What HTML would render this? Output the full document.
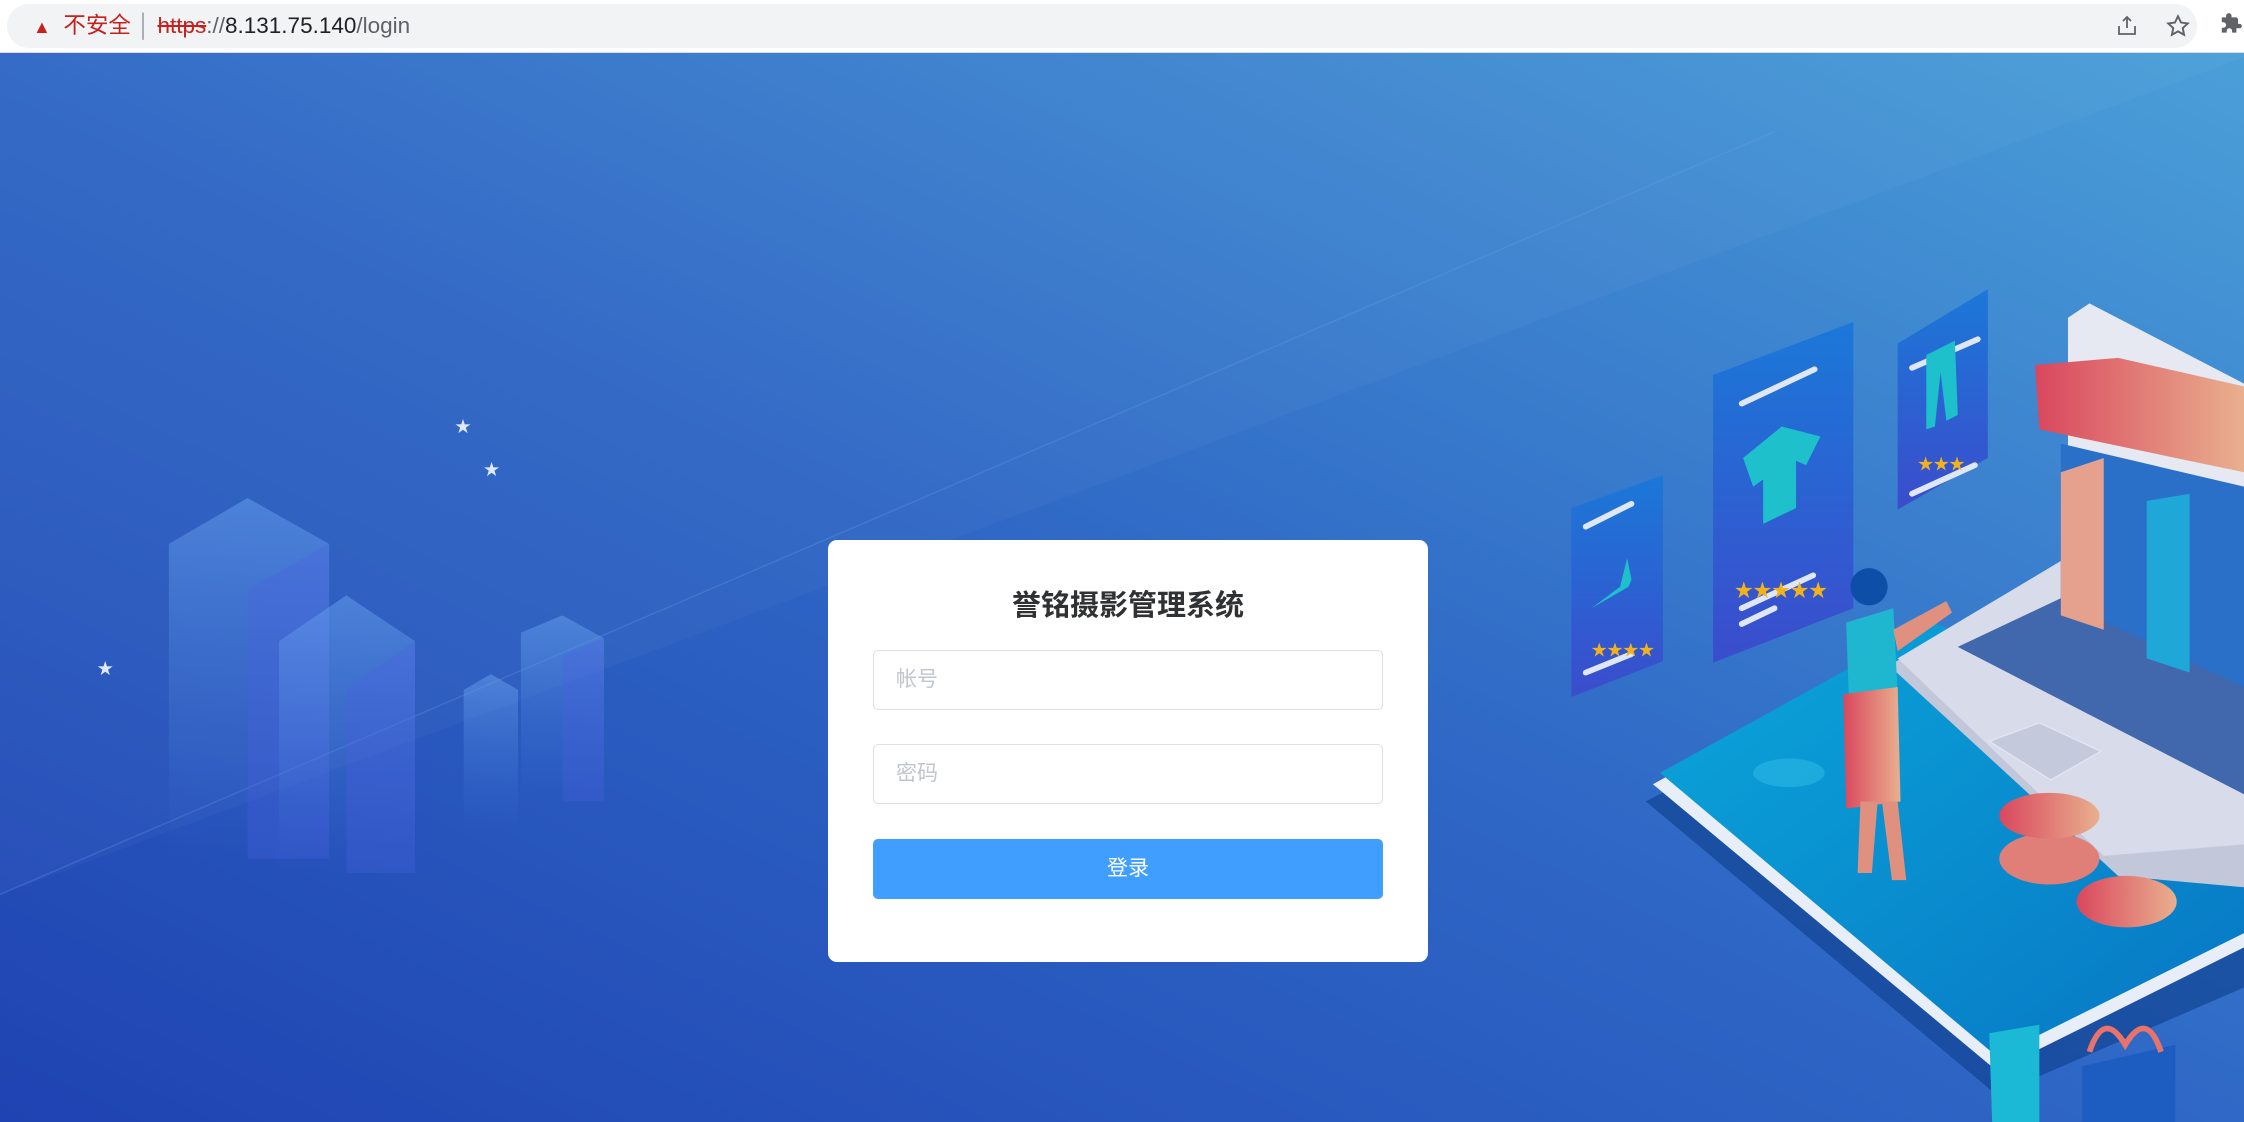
<!DOCTYPE html>
<html><head><meta charset="utf-8"><style>
*{margin:0;padding:0;box-sizing:border-box}
body{width:2244px;height:1122px;overflow:hidden;position:relative;font-family:"Liberation Sans","Noto Sans CJK SC",sans-serif;background:#fff}
.bar{position:absolute;left:0;top:0;width:2244px;height:53px;background:#fff;border-bottom:1px solid #dadce0}
.pill{position:absolute;left:7px;top:4px;width:2190px;height:44px;border-radius:22px;background:#f1f3f4}
.url{position:absolute;left:26px;top:0;height:44px;line-height:44px;font-size:22.5px;color:#202124;white-space:nowrap}
.bg{position:absolute;left:0;top:53px}
.card{position:absolute;left:828px;top:540px;width:600px;height:422px;background:#fff;border-radius:9px}
.title{position:absolute;left:0;width:100%;top:42px;text-align:center;font-size:29px;font-weight:bold;color:#303133}
.inp{position:absolute;left:45px;width:510px;height:60px;border:1.5px solid #dcdfe6;border-radius:5px;font-size:21px;color:#c0c4cc;line-height:57px;padding-left:22px}
.btn{position:absolute;left:45px;top:299px;width:510px;height:60px;background:#409eff;border-radius:5px;color:#fff;font-size:21px;text-align:center;line-height:60px}
</style></head><body>
<div class="bar"><div class="pill"><div class="url"><span style="color:#c5221f;font-size:18px">▲</span>&nbsp; <span style="color:#c5221f">不安全</span> <span style="color:#9aa0a6">│</span> <span style="color:#c5221f;text-decoration:line-through">https</span><span style="color:#5f6368">://</span>8.131.75.140<span style="color:#5f6368">/login</span></div>
<svg style="position:absolute;left:2108px;top:10px" width="24" height="24" viewBox="0 0 24 24" fill="none" stroke="#5f6368" stroke-width="1.8"><path d="M4 12v8h16v-8M12 3v11M8 7l4-4 4 4"/></svg>
<svg style="position:absolute;left:2158px;top:9px" width="26" height="26" viewBox="0 0 24 24" fill="none" stroke="#5f6368" stroke-width="1.8"><path d="M12 3l2.8 5.8 6.2.8-4.6 4.3 1.2 6.2L12 17l-5.6 3.1 1.2-6.2L3 9.6l6.2-.8z"/></svg>
</div>
<svg style="position:absolute;left:2218px;top:12px" width="26" height="26" viewBox="0 0 24 24" fill="#5f6368"><path d="M20 11h-1.5V7c0-1.1-.9-2-2-2h-4V3.5a2.5 2.5 0 0 0-5 0V5H3.5v4.5H5a2.5 2.5 0 0 1 0 5H3.5V19h4.5v-1.5a2.5 2.5 0 0 1 5 0V19h4v-4H20a2 2 0 0 0 0-4z"/></svg>
</div>
<svg class="bg" width="2244" height="1069" viewBox="0 37 1568 747" preserveAspectRatio="none">
<defs>
<linearGradient id="g" x1="0" y1="1" x2="1" y2="0"><stop offset="0" stop-color="#1f43b2"/><stop offset=".5" stop-color="#2f68c6"/><stop offset="1" stop-color="#4a9fd8"/></linearGradient>
<linearGradient id="b" x1="0" y1="0" x2="0" y2="1"><stop offset="0" stop-color="#6aa3f0" stop-opacity=".5"/><stop offset="1" stop-color="#4a7fe0" stop-opacity="0"/></linearGradient>
<linearGradient id="c" x1="0" y1="0" x2="0" y2="1"><stop offset="0" stop-color="#1b78d8"/><stop offset="1" stop-color="#3b4ccc"/></linearGradient>
<linearGradient id="p" x1="0" y1="0" x2="1" y2="1"><stop offset="0" stop-color="#0aa6da"/><stop offset="1" stop-color="#0876c4"/></linearGradient>
<linearGradient id="s" x1="0" y1="0" x2="1" y2="0"><stop offset="0" stop-color="#d9475e"/><stop offset="1" stop-color="#e9b08e"/></linearGradient>
</defs>
<rect x="0" y="37" width="1568" height="747" fill="url(#g)"/>
<polygon points="0,37 1568,37 1568,40 0,625" fill="#fff" opacity=".03"/>
<line x1="0" y1="625" x2="1240" y2="92" stroke="#6ea6e6" stroke-width="1" opacity=".25"/>
<!-- buildings -->
<polygon points="118,380 173,348 230,380 230,600 118,600" fill="url(#b)"/>
<polygon points="173,412 230,380 230,600 173,600" fill="#4b5fe0" opacity=".3"/>
<polygon points="195,448 242,416 290,448 290,610 195,610" fill="url(#b)"/>
<polygon points="242,480 290,448 290,610 242,610" fill="#4b5fe0" opacity=".3"/>
<polygon points="324,482 343,471 362,482 362,580 324,580" fill="url(#b)"/>
<polygon points="364,442 393,430 422,446 422,560 364,560" fill="url(#b)"/>
<polygon points="393,458 422,446 422,560 393,560" fill="#4b5fe0" opacity=".3"/>
<g fill="#dfe8ff"><text x="318" y="302" font-size="11">★</text><text x="338" y="332" font-size="11">★</text><text x="68" y="471" font-size="11">★</text></g>
<!-- platform -->
<polygon points="1150,560 1350,455 1568,540 1568,690 1395,765" fill="#0a3a85" opacity=".55"/>
<polygon points="1155,548 1350,440 1568,520 1568,662 1395,748" fill="#e8eef8"/>
<polygon points="1160,540 1350,435 1568,512 1568,652 1395,738" fill="url(#p)"/>
<ellipse cx="1250" cy="540" rx="25" ry="10" fill="#2cb8e4" opacity=".6"/>
<!-- laptop -->
<polygon points="1445,222 1460,212 1568,268 1568,420 1445,360" fill="#e6e9f2"/>
<polygon points="1320,465 1440,395 1568,455 1568,620 1480,612" fill="#c3c7da"/>
<polygon points="1326,460 1440,392 1568,450 1568,590 1470,598" fill="#d7dbea"/>
<polygon points="1368,452 1440,418 1568,478 1568,555" fill="#1c4a9c" opacity=".8"/>
<polygon points="1390,518 1425,505 1468,525 1433,545" fill="#c5c9dc" stroke="#e2e5f0"/>
<!-- racks -->
<polygon points="1422,255 1480,250 1568,270 1568,330 1425,300" fill="url(#s)"/>
<polygon points="1440,310 1568,340 1568,480 1440,420" fill="#2a6fc8"/>
<polygon points="1440,330 1470,320 1470,440 1440,430" fill="#e5a08e"/>
<polygon points="1500,350 1530,345 1530,470 1500,460" fill="#1fa7d8"/>
<!-- cards -->
<polygon points="1098,355 1162,332 1162,462 1098,487" fill="url(#c)"/>
<polygon points="1197,262 1295,225 1295,425 1197,463" fill="url(#c)"/>
<polygon points="1326,240 1389,202 1389,320 1326,356" fill="url(#c)"/>
<g stroke="#dfe6f5" stroke-width="4" stroke-linecap="round"><line x1="1108" y1="368" x2="1140" y2="352"/><line x1="1217" y1="282" x2="1268" y2="258"/><line x1="1336" y1="257" x2="1382" y2="237"/><line x1="1217" y1="425" x2="1267" y2="402"/><line x1="1217" y1="436" x2="1240" y2="425"/><line x1="1108" y1="470" x2="1140" y2="457"/><line x1="1336" y1="345" x2="1380" y2="325"/></g>
<polygon points="1218,320 1245,298 1272,305 1262,325 1255,322 1255,355 1232,366 1232,335 1225,340" fill="#1ec0cc"/>
<path d="M1112,425 l20,-15 l5,-20 l3,15 l-2,5 z" fill="#1ec0cc"/>
<polygon points="1346,248 1366,238 1368,290 1360,294 1356,260 1352,298 1346,300" fill="#1ec0cc"/>
<g fill="#f2b21c" font-size="13"><text x="1212" y="417">★★★★★</text><text x="1112" y="458" font-size="11">★★★★</text><text x="1340" y="328" font-size="11">★★★</text></g>
<!-- woman -->
<circle cx="1306" cy="410" r="13" fill="#0d4ea8"/>
<polygon points="1290,435 1323,425 1326,485 1292,490" fill="#1fb7d0"/>
<polygon points="1288,485 1326,480 1328,560 1290,565" fill="url(#s)"/>
<polygon points="1300,560 1312,560 1308,610 1298,610" fill="#e0907e"/>
<polygon points="1315,560 1326,560 1332,615 1322,615" fill="#e0907e"/>
<polygon points="1323,440 1360,420 1364,428 1326,455" fill="#e0907e"/>
<!-- coins -->
<ellipse cx="1432" cy="600" rx="35" ry="18" fill="#e07e78"/><ellipse cx="1432" cy="570" rx="35" ry="16" fill="url(#s)"/>
<ellipse cx="1486" cy="630" rx="35" ry="18" fill="url(#s)"/>
<!-- gift -->
<polygon points="1390,722 1425,716 1425,784 1392,784" fill="#1bb9d6"/>
<polygon points="1455,745 1520,730 1520,784 1455,784" fill="#1d5cc0"/>
<path d="M1460,735 q10,-30 25,-5 q15,-25 25,5" fill="none" stroke="#e9736a" stroke-width="4"/>
</svg>
<div class="card">
<div class="title">誉铭摄影管理系统</div>
<div class="inp" style="top:110px">帐号</div>
<div class="inp" style="top:204px">密码</div>
<div class="btn">登录</div>
</div>
</body></html>
